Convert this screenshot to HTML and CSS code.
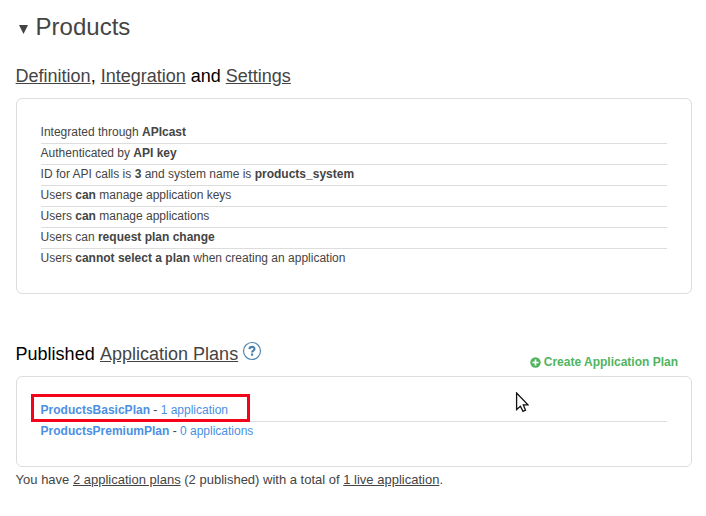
FILE: index.html
```html
<!DOCTYPE html>
<html lang="en">
<head>
<meta charset="utf-8">
<title>Products</title>
<link rel="stylesheet" href="styles.css">
</head>
<body>
<main class="page">
  <h1 class="title">
    <svg class="caret" width="9" height="9" viewBox="0 0 9 9"><path d="M0 0H9L4.5 9Z" fill="#444"/></svg>
    <span>Products</span>
  </h1>
  <h2 class="heading"><a href="#">Definition</a>, <a href="#">Integration</a> and <a href="#">Settings</a></h2>
  <ul class="panel settings">
    <li>Integrated through <b>APIcast</b></li>
    <li>Authenticated by <b>API key</b></li>
    <li>ID for API calls is <b>3</b> and system name is <b>products_system</b></li>
    <li>Users <b>can</b> manage application keys</li>
    <li>Users <b>can</b> manage applications</li>
    <li>Users can <b>request plan change</b></li>
    <li>Users <b>cannot select a plan</b> when creating an application</li>
  </ul>
  <div class="plans-head">
    <h2 class="heading">Published <a class="plans-link" href="#">Application Plans</a></h2>
    <svg class="help" width="20" height="20" viewBox="0 0 20 20"><circle cx="10" cy="10" r="8.5" fill="none" stroke="#5187b0" stroke-width="1.2"/><path d="M7.5 8.1C7.6 5.2 12.5 5.2 12.5 7.9C12.5 9.6 10.1 9.5 10.1 11.5M10.1 12.6V14.7" fill="none" stroke="#4a80aa" stroke-width="2.1"/></svg>
    <a class="create" href="#">
      <svg width="11" height="11" viewBox="0 0 11 11"><circle cx="5.5" cy="5.5" r="5.2" fill="#4fb45f"/><path d="M5.5 2.4V8.6M2.4 5.5H8.6" stroke="#fff" stroke-width="1.7"/></svg>
      <span>Create Application Plan</span>
    </a>
  </div>
  <ul class="panel plans">
    <li><a href="#"><b>ProductsBasicPlan</b></a> - <a href="#">1 application</a></li>
    <li><a href="#"><b>ProductsPremiumPlan</b></a> - <a href="#">0 applications</a></li>
    <li class="highlight"></li>
  </ul>
  <p class="summary">You have <a href="#">2 application plans</a> (2 published) with a total of <a href="#">1 live application</a>.</p>
</main>
<svg class="cursor" width="14" height="21" viewBox="0 0 14 21"><path d="M1.6 1V17.6L5.4 14.2L8 19.4L10.5 18.2L8.3 12.8H13Z" fill="#fff" stroke="#111" stroke-width="1.3"/></svg>
</body>
</html>
```
FILE: styles.css
```css
* { box-sizing: border-box; }
body {
  margin: 0;
  background: #fff;
  color: #444;
  font: 12px/20px "Liberation Sans", Arial, sans-serif;
}
.page { padding: 12px 14.4px 0 15.6px; }
a { color: #444; }
.title {
  display: flex;
  align-items: center;
  height: 30px;
  margin: 0 0 22px 3px;
  font-size: 24px;
  font-weight: 400;
  line-height: 30px;
}
.caret { margin: 5px 8px 0 0; }
.heading {
  margin: 0;
  color: #000;
  font-size: 18px;
  font-weight: 400;
  line-height: 24px;
}
.panel {
  position: relative;
  margin: 10px 0 0;
  padding: 24px;
  border: 1px solid #ddd;
  border-radius: 6px;
  list-style: none;
}
.panel li {
  height: 21px;
  line-height: 18px;
  border-bottom: 1px solid #ddd;
}
.settings li:last-child, .plans li:nth-child(2) {
  height: 20px;
  border-bottom: 0;
}
.plans-head {
  display: flex;
  height: 34px;
  margin-top: 48px;
}
.plans-link { margin-left: .4px; }
.help { margin: -1px 0 0 3.6px; }
.create {
  display: flex;
  align-items: center;
  height: 20px;
  margin: 10px 13.6px 0 auto;
  color: #4fb45f;
  font-weight: 700;
  text-decoration: none;
}
.create svg { margin-right: 3px; }
.plans { margin-top: 0; }
.plans a { color: #4a90e2; text-decoration: none; }
.panel .highlight {
  position: absolute;
  left: 14px;
  top: 17px;
  width: 219px;
  height: 28px;
  border: 3px solid #f40418;
}
.summary {
  margin: 3px 0 0;
  font-size: 13px;
  line-height: 20px;
}
.cursor {
  position: absolute;
  left: 515px;
  top: 392px;
}
```
